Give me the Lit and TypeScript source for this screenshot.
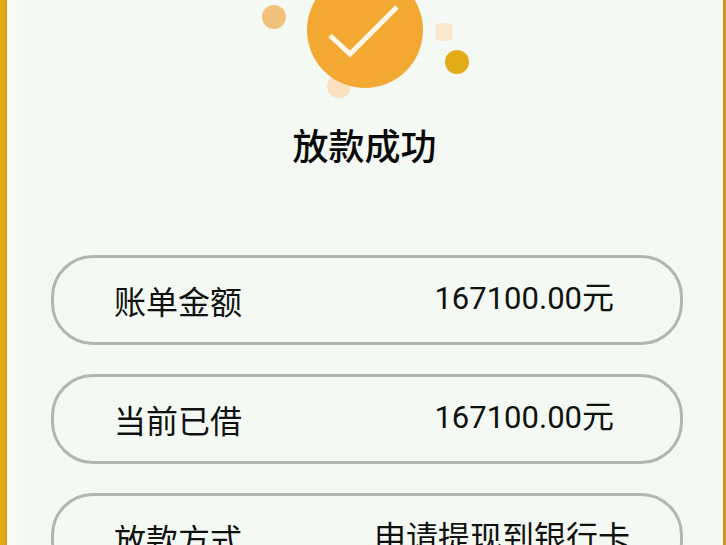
import { LitElement, html, css } from "lit";
import { customElement } from "lit/decorators.js";
import { classMap } from "lit/directives/class-map.js";

interface Row {
  label: string;
  amount?: string;
  text: string;
  wide?: boolean;
}

const ROWS: Row[] = [
  { label: "账单金额", amount: "167100.00", text: "元" },
  { label: "当前已借", amount: "167100.00", text: "元" },
  { label: "放款方式", text: "申请提现到银行卡", wide: true },
];

@customElement("app-root")
export class AppRoot extends LitElement {
  static styles = css`
    :host {
      display: block;
      box-sizing: border-box;
      height: 100vh;
      overflow: hidden;
      background: linear-gradient(90deg, #e4ab18 0, #e2a916 4px, #cd9a22 7px, #cd9a22 50%, #cf9527 100%);
      padding: 0 3px 0 7px;
      font-family: "Noto Sans CJK SC", sans-serif;
      color: #101210;
    }
    .panel {
      box-sizing: border-box;
      min-height: 100%;
      padding: 0 39px 0 44px;
      background: linear-gradient(90deg, #fcfaf0 0, #fbfaf2 5px, #f4f9f4 14px);
      border-right: 1px solid #fcf3cf;
    }
    .status {
      padding-right: 5px;
    }
    .art {
      display: block;
      width: 240px;
      height: 118px;
      margin: 0 auto;
    }
    .title {
      margin: 0;
      text-align: center;
      font-size: 36px;
      line-height: 52px;
      font-weight: 500;
      color: #080908;
    }
    .rows {
      display: flex;
      flex-direction: column;
      gap: 29px;
      margin: 85px 0 0;
    }
    .row {
      box-sizing: border-box;
      display: flex;
      justify-content: space-between;
      align-items: center;
      min-height: 90px;
      padding: 0 66px 0 60px;
      border: 3px solid #b1b7b0;
      border-radius: 42px;
      font-size: 32px;
      line-height: 48px;
      white-space: nowrap;
    }
    .row.wide {
      padding-right: 50px;
    }
    .label,
    .value {
      margin: 0;
    }
    .value {
      padding-bottom: 6px;
    }
    .amount {
      font-family: Roboto, sans-serif;
      font-size: 31px;
    }
  `;

  render() {
    return html`
      <main class="panel">
        <header class="status">
          <svg class="art" viewBox="0 0 240 118" aria-hidden="true">
            <circle cx="29" cy="17" r="12" fill="#f2c27c" />
            <circle cx="94" cy="86" r="12" fill="#fbe1c0" />
            <rect x="190" y="23" width="18" height="18" rx="5" fill="#fae8d3" />
            <circle cx="212" cy="62" r="12" fill="#e2ac18" />
            <circle cx="120" cy="30" r="58" fill="#f3a832" />
            <path d="M85 35.500L105 54L152 7" fill="none" stroke="#fff8e8" stroke-width="5" />
          </svg>
          <h1 class="title">放款成功</h1>
        </header>
        <dl class="rows">
          ${ROWS.map(
            (row) => html`
              <div class=${classMap({ row: true, wide: !!row.wide })}>
                <dt class="label">${row.label}</dt>
                <dd class="value">${row.amount ? html`<span class="amount">${row.amount}</span>` : ""}${row.text}</dd>
              </div>
            `
          )}
        </dl>
      </main>
    `;
  }
}
